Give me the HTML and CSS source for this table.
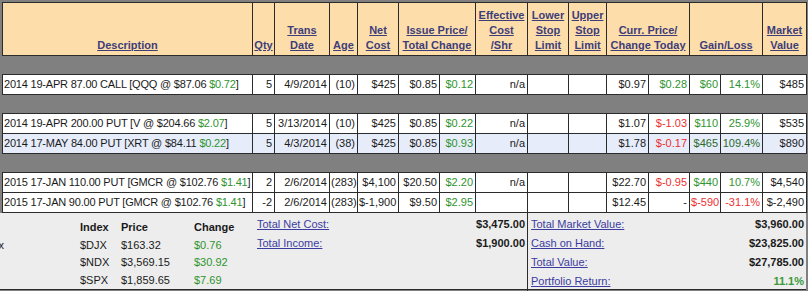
FILE: index.html
```html
<!DOCTYPE html>
<html>
<head>
<meta charset="utf-8">
<link rel="stylesheet" href="styles.css">
</head>
<body>
<div class="page">
<table class="pos">
  <colgroup>
    <col class="c-desc"><col class="c-qty"><col class="c-date"><col class="c-age"><col class="c-net">
    <col class="c-iss"><col class="c-tot"><col class="c-eff"><col class="c-low"><col class="c-up">
    <col class="c-cur"><col class="c-chg"><col class="c-gl"><col class="c-glp"><col class="c-mv">
  </colgroup>
  <tr class="hdr">
    <th><a href="#">Description</a></th>
    <th><a href="#">Qty</a></th>
    <th><a href="#">Trans<br>Date</a></th>
    <th><a href="#">Age</a></th>
    <th><a href="#">Net<br>Cost</a></th>
    <th colspan="2"><a href="#">Issue Price/<br>Total Change</a></th>
    <th><a href="#">Effective<br>Cost<br>/Shr</a></th>
    <th><a href="#">Lower<br>Stop<br>Limit</a></th>
    <th><a href="#">Upper<br>Stop<br>Limit</a></th>
    <th colspan="2"><a href="#">Curr. Price/<br>Change Today</a></th>
    <th colspan="2"><a href="#">Gain/Loss</a></th>
    <th><a href="#">Market<br>Value</a></th>
  </tr>
  <tr class="gap"><td colspan="15"></td></tr>
  <tr class="row">
    <td class="desc">2014 19-APR 87.00 CALL [QQQ @ $87.06 <span class="g">$0.72</span>]</td>
    <td>5</td><td>4/9/2014</td><td>(10)</td><td>$425</td><td>$0.85</td><td class="g">$0.12</td>
    <td>n/a</td><td></td><td></td><td>$0.97</td><td class="g">$0.28</td><td class="g">$60</td><td class="g">14.1%</td><td>$485</td>
  </tr>
  <tr class="gap"><td colspan="15"></td></tr>
  <tr class="row">
    <td class="desc">2014 19-APR 200.00 PUT [V @ $204.66 <span class="g">$2.07</span>]</td>
    <td>5</td><td>3/13/2014</td><td>(10)</td><td>$425</td><td>$0.85</td><td class="g">$0.22</td>
    <td>n/a</td><td></td><td></td><td>$1.07</td><td class="r">$-1.03</td><td class="g">$110</td><td class="g">25.9%</td><td>$535</td>
  </tr>
  <tr class="row sel">
    <td class="desc">2014 17-MAY 84.00 PUT [XRT @ $84.11 <span class="g">$0.22</span>]</td>
    <td>5</td><td>4/3/2014</td><td>(38)</td><td>$425</td><td>$0.85</td><td class="g">$0.93</td>
    <td>n/a</td><td></td><td></td><td>$1.78</td><td class="r">$-0.17</td><td class="dg">$465</td><td class="dg">109.4%</td><td>$890</td>
  </tr>
  <tr class="gap"><td colspan="15"></td></tr>
  <tr class="row">
    <td class="desc">2015 17-JAN 110.00 PUT [GMCR @ $102.76 <span class="g">$1.41</span>]</td>
    <td>2</td><td>2/6/2014</td><td>(283)</td><td>$4,100</td><td>$20.50</td><td class="g">$2.20</td>
    <td>n/a</td><td></td><td></td><td>$22.70</td><td class="r">$-0.95</td><td class="g">$440</td><td class="g">10.7%</td><td>$4,540</td>
  </tr>
  <tr class="row">
    <td class="desc">2015 17-JAN 90.00 PUT [GMCR @ $102.76 <span class="g">$1.41</span>]</td>
    <td>-2</td><td>2/6/2014</td><td>(283)</td><td>$-1,900</td><td>$9.50</td><td class="g">$2.95</td>
    <td></td><td></td><td></td><td>$12.45</td><td>-</td><td class="r">$-590</td><td class="r">-31.1%</td><td>$-2,490</td>
  </tr>
</table>

<div class="summary">
  <div class="indexes">
    <div class="idx-row head"><span class="lead"></span><span>Index</span><span>Price</span><span>Change</span></div>
    <div class="idx-row"><span class="lead"><span class="cut">Market Index</span></span><span>$DJX</span><span>$163.32</span><span class="g">$0.76</span></div>
    <div class="idx-row"><span class="lead"></span><span>$NDX</span><span>$3,569.15</span><span class="g">$30.92</span></div>
    <div class="idx-row"><span class="lead"></span><span>$SPX</span><span>$1,859.65</span><span class="g">$7.69</span></div>
  </div>
  <div class="totals">
    <div class="tot-row"><a href="#">Total Net Cost:</a><b>$3,475.00</b></div>
    <div class="tot-row"><a href="#">Total Income:</a><b>$1,900.00</b></div>
  </div>
  <div class="totals right">
    <div class="tot-row"><a href="#">Total Market Value:</a><b>$3,960.00</b></div>
    <div class="tot-row"><a href="#">Cash on Hand:</a><b>$23,825.00</b></div>
    <div class="tot-row"><a href="#">Total Value:</a><b>$27,785.00</b></div>
    <div class="tot-row"><a href="#">Portfolio Return:</a><b class="g">11.1%</b></div>
  </div>
</div>
</div>
</body>
</html>
```

FILE: styles.css
```css
html, body {
  margin: 0;
  padding: 0;
}
body {
  background: #808080;
  font-family: "Liberation Sans", Arial, sans-serif;
  font-size: 11px;
  color: #1a1a1a;
  width: 808px;
  height: 291px;
  overflow: hidden;
}
.page {
  padding-top: 2px;
  width: 806px;
}
.pos {
  border-collapse: collapse;
  table-layout: fixed;
  width: 805px;
  margin-left: 2px;
}
.c-desc { width: 250px; }
.c-qty { width: 22px; }
.c-date { width: 55px; }
.c-age { width: 28px; }
.c-net { width: 41px; }
.c-iss { width: 41px; }
.c-tot { width: 36px; }
.c-eff { width: 52px; }
.c-low { width: 41px; }
.c-up { width: 38px; }
.c-cur { width: 42px; }
.c-chg { width: 41px; }
.c-gl { width: 31px; }
.c-glp { width: 42px; }
.c-mv { width: 44px; }

.hdr th {
  background: #fddda9;
  border: 1px solid #2b2b2b;
  height: 50px;
  padding: 0 0 2px;
  vertical-align: bottom;
  text-align: center;
  font-weight: bold;
  line-height: 15px;
  white-space: nowrap;
  overflow: hidden;
}
.hdr a {
  color: #3d3d7a;
  text-decoration: underline;
}
.gap td {
  height: 18px;
  padding: 0;
  border: none;
  background: #808080;
}
.row td {
  background: #ffffff;
  border: 1px solid #2b2b2b;
  height: 19px;
  padding: 0 2px 0 1px;
  text-align: right;
  white-space: nowrap;
  overflow: hidden;
  line-height: 19px;
}
.row td.desc {
  text-align: left;
  letter-spacing: -0.2px;
}
.row.sel td {
  background: #e6ecfa;
}
.g { color: #2e942e; }
.dg { color: #2a6a2a; }
.r { color: #ee2f2f; }

.summary {
  display: grid;
  grid-template-columns: 252px 275px 279px;
  background: #ededed;
  border-bottom: 1px solid #2b2b2b;
  height: 76px;
}
.indexes {
  padding-top: 6px;
}
.idx-row {
  display: grid;
  grid-template-columns: 80px 41px 73px 58px;
  line-height: 17.5px;
}
.idx-row.head {
  font-weight: bold;
}
.lead {
  display: flex;
  justify-content: flex-end;
  overflow: visible;
  padding-right: 76px;
  white-space: nowrap;
}
.totals {
  padding: 2px 2px 0 5px;
}
.totals.right {
  border-left: 1px solid #2b2b2b;
  padding-left: 3px;
}
.tot-row {
  display: flex;
  justify-content: space-between;
  line-height: 19px;
}
.tot-row a {
  color: #3b3ba0;
  text-decoration: underline;
}
.tot-row b {
  font-weight: bold;
}
.tot-row b.g {
  color: #3a9a3a;
}
```
